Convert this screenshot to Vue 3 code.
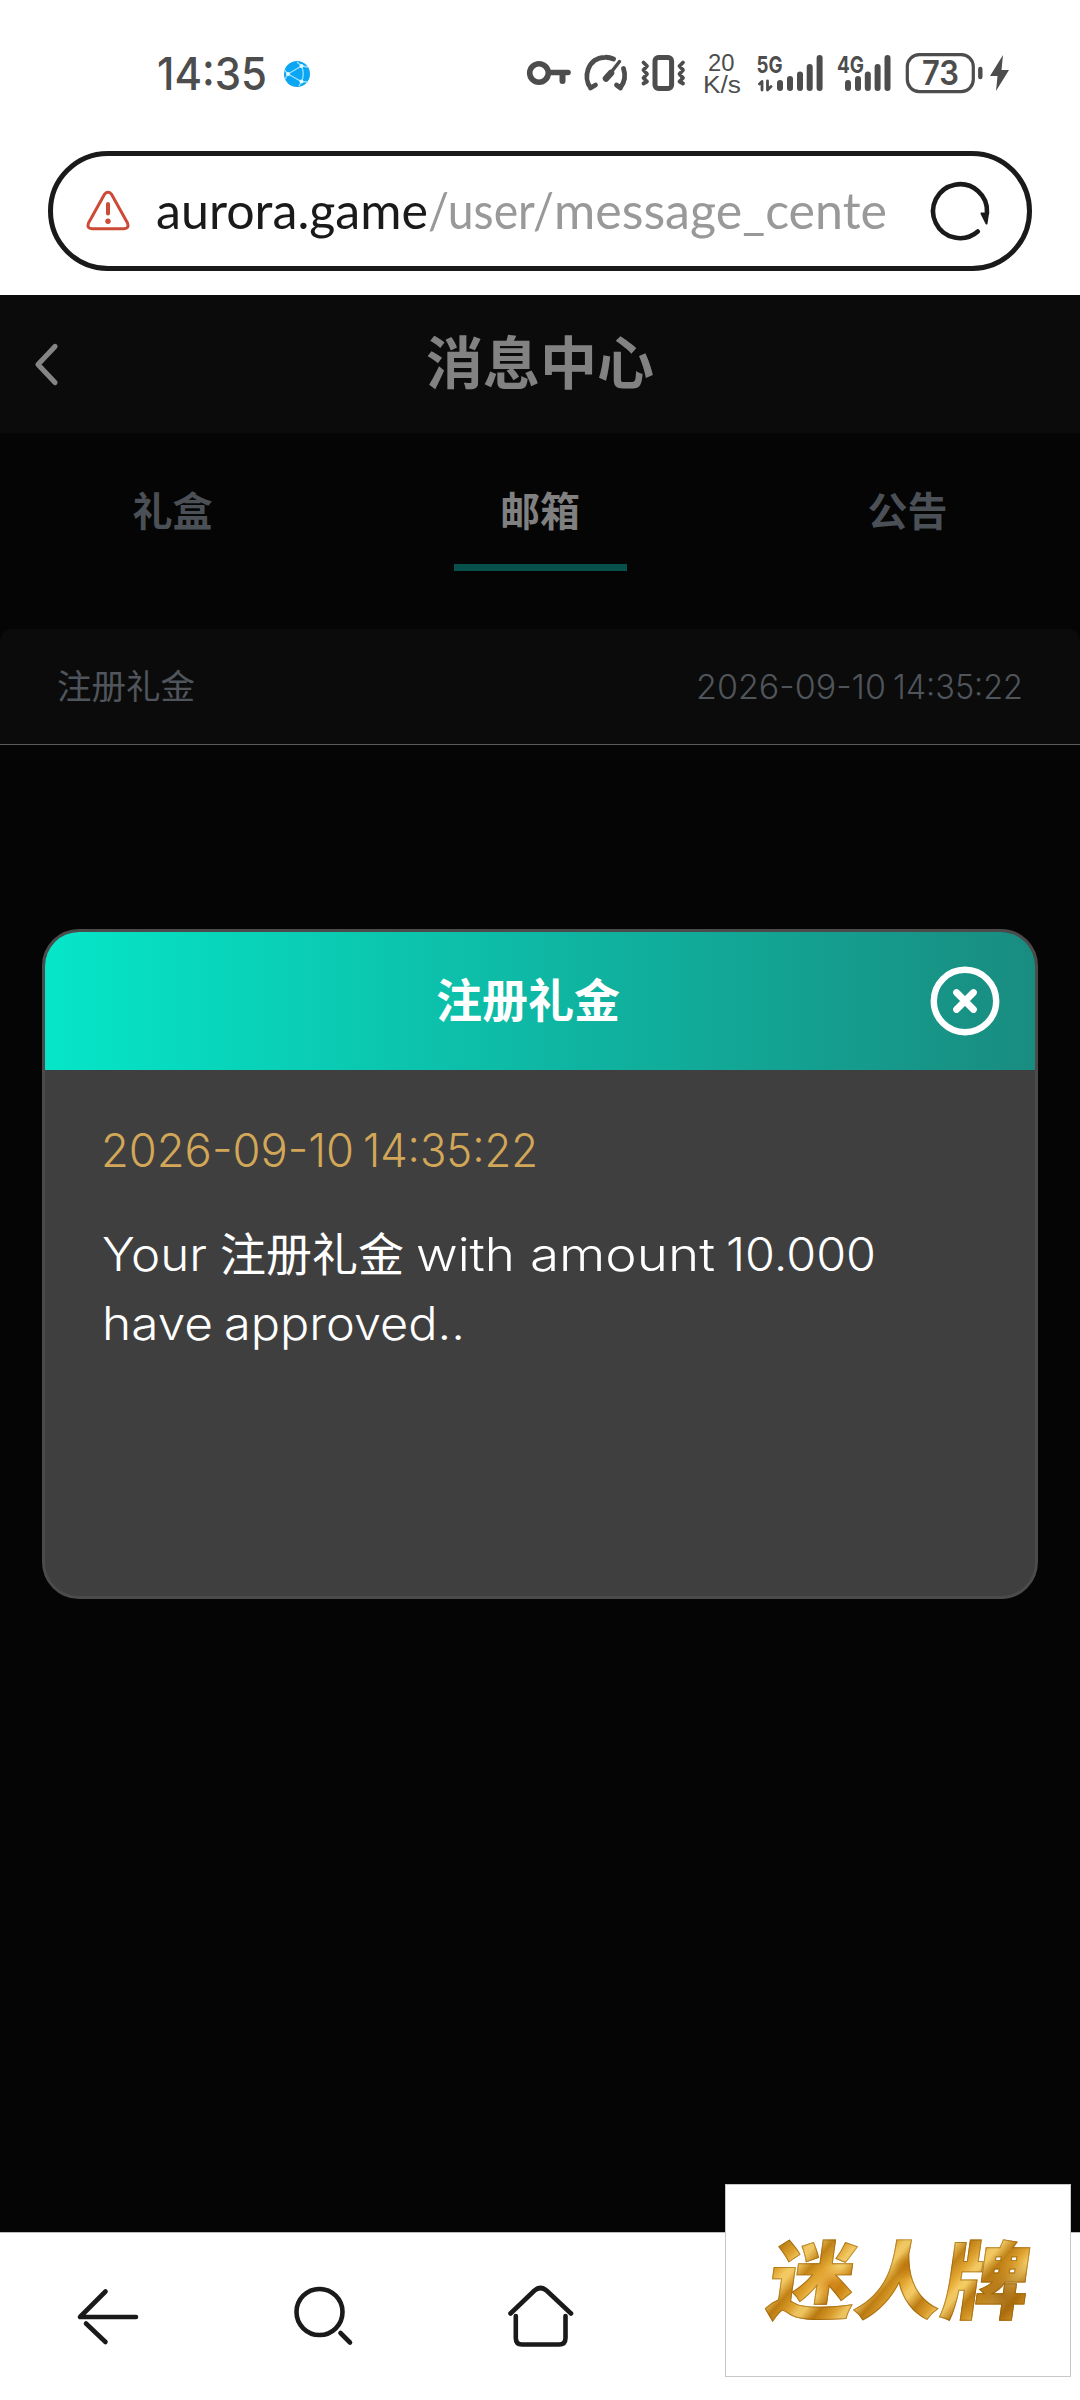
<script setup>
const tabs = [
  { label: '礼盒', active: false },
  { label: '邮箱', active: true },
  { label: '公告', active: false },
]
const signalA = [[780, 80], [790, 76], [800, 71.5], [809.7, 64], [819.6, 55]]
const signalB = [[848, 80], [858, 76], [867.8, 71.5], [877.6, 64], [887.5, 55]]
</script>

<template>
  <div class="phone">
    <header class="browser">
      <div class="status">
        <svg class="clock" width="160" height="60" viewBox="150 44 160 60">
          <text x="157" y="90" textLength="110" lengthAdjust="spacingAndGlyphs" font-size="45.5" font-weight="500">14:35</text>
          <circle cx="297" cy="74" r="13" fill="#0aa5f3" />
          <g stroke="#9be0ff" stroke-width="1.3" fill="none">
            <path d="M288 74 L301.500 66 Q305 74 301.500 81.500 Z M301.500 66 L297 62 M301.500 66 L308 67 M288 74 L284.500 70 M288 74 L285 79 M301.500 81.500 L308 82 M301.500 81.500 L299 86" />
          </g>
          <g fill="#e6f8ff"><circle cx="288" cy="74" r="2" /><circle cx="301.500" cy="66" r="2" /><circle cx="301.500" cy="81.500" r="2" /></g>
        </svg>
        <svg class="indicators" width="490" height="60" viewBox="525 44 490 60">
          <g fill="none" stroke="#4d4d4d" stroke-linecap="round" stroke-linejoin="round">
            <circle cx="539" cy="73" r="9.300" stroke-width="5.600" />
            <path d="M550 72.500H568" stroke-width="5.600" />
            <path d="M562.500 75V81" stroke-width="6" />
            <path d="M590.500 87.500C583 78 587 58 605 57.300Q609 57 613.500 59M623.500 68.500Q627 79 620.500 87.500M590.500 88L595.500 85M620.500 88L616.500 85" stroke-width="4.800" />
            <path d="M619.500 61.500L606 79" stroke-width="3.400" />
            <path d="M611 73L606 78.500" stroke-width="6.500" />
            <rect x="655" y="57.500" width="16.600" height="31" rx="3.500" stroke-width="5" />
            <path d="M643.500 62.500L647 66L643.500 70L647 74L643.500 78L647 81.500L643.500 83.500M683 62.500L679.500 66L683 70L679.500 74L683 78L679.500 81.500L683 83.500" stroke-width="3.800" />
            <rect x="907.300" y="54.600" width="66" height="37" rx="12" stroke-width="3.200" />
            <path d="M980.300 69V77" stroke-width="4.400" />
            <path d="M762 90V81.500L759.500 84M767.500 81V90L771 86.500" stroke-width="2.800" />
          </g>
          <g stroke="#4d4d4d" stroke-width="6" stroke-linecap="round">
            <line v-for="b in signalA" :key="b[0]" :x1="b[0]" :x2="b[0]" :y1="b[1] + 3" y2="88" />
            <line v-for="b in signalB" :key="b[0]" :x1="b[0]" :x2="b[0]" :y1="b[1] + 3" y2="88" />
          </g>
          <path d="M1003 55L990 76H997.500L996 91L1009 70H1001.500Z" fill="#4d4d4d" />
          <g fill="#4d4d4d">
            <text class="rate" x="708" y="70.500" textLength="26.500" lengthAdjust="spacingAndGlyphs" font-size="24">20</text>
            <text class="rate" x="703" y="92.500" textLength="38" lengthAdjust="spacingAndGlyphs" font-size="23">K/s</text>
            <text x="756.500" y="72.500" textLength="26" lengthAdjust="spacingAndGlyphs" font-size="23.500" font-weight="700">5G</text>
            <text x="837" y="72.500" textLength="27" lengthAdjust="spacingAndGlyphs" font-size="23.500" font-weight="700">4G</text>
            <text x="922" y="85" textLength="37" lengthAdjust="spacingAndGlyphs" font-size="34" font-weight="600">73</text>
          </g>
        </svg>
      </div>
      <div class="address">
        <svg class="warn" width="46" height="42" viewBox="85 190 46 42" fill="none" stroke="#cc4b37" stroke-linecap="round" stroke-linejoin="round">
          <path d="M104.500 194.200Q108 190.500 111.500 194.200L127.500 223Q129.500 228.500 124 228.700H92Q86.500 228.500 88.500 223Z" stroke-width="3" />
          <path d="M108 204V213.500" stroke-width="4" />
          <circle cx="108" cy="221.300" r="2.700" fill="#cc4b37" stroke="none" />
        </svg>
        <svg class="url" width="750" height="70" viewBox="150 180 750 70">
          <text x="156" y="229" textLength="272" lengthAdjust="spacingAndGlyphs" font-size="50" fill="#1a1a1a">aurora.game</text>
          <text x="428" y="229" textLength="126" lengthAdjust="spacingAndGlyphs" font-size="50" fill="#999">/user/</text>
          <text x="554" y="229" textLength="333" lengthAdjust="spacingAndGlyphs" font-size="50" fill="#999">message_cente</text>
        </svg>
        <svg class="reload" width="62" height="62" viewBox="929 180 62 62">
          <path d="M977.800 231.500A27 27 0 1 1 987 213" fill="none" stroke="#1a1a1a" stroke-width="4.600" stroke-linecap="round" />
          <path d="M981.500 213.500H988L986.500 223.500Z" fill="#1a1a1a" stroke="#1a1a1a" stroke-width="2" stroke-linejoin="round" />
        </svg>
      </div>
    </header>

    <main class="page">
      <div class="titlebar">
        <svg class="back" width="30" height="46" viewBox="0 0 30 46"><path d="M22 5.500L5 23.500L22 41.500" fill="none" stroke="#858585" stroke-width="5.200" stroke-linecap="round" stroke-linejoin="round" /></svg>
        <h1>消息中心</h1>
      </div>
      <nav class="tabs">
        <div v-for="t in tabs" :key="t.label" class="tab" :class="{ active: t.active }">{{ t.label }}</div>
      </nav>
      <div class="row">
        <span class="row-title">注册礼金</span>
        <svg class="row-date" width="328" height="46" viewBox="694 664 328 46" fill="#50555b" font-size="33.500" font-weight="350">
          <text x="695" y="699" textLength="190" lengthAdjust="spacingAndGlyphs">2026-09-10</text>
          <text x="892" y="699" textLength="130" lengthAdjust="spacingAndGlyphs">14:35:22</text>
        </svg>
      </div>

      <section class="dialog">
        <div class="dialog-head">
          <h2>注册礼金</h2>
          <svg class="close" width="70" height="70" viewBox="0 0 70 70" fill="none" stroke="#fff">
            <circle cx="35" cy="35" r="31.200" stroke-width="6.400" />
            <path d="M26.500 26.500L43.500 43.500M43.500 26.500L26.500 43.500" stroke-width="6.800" stroke-linecap="round" />
          </svg>
        </div>
        <svg class="message" width="800" height="260" viewBox="100 1120 800 260" font-weight="330" fill="#fff">
          <text x="101" y="1167" textLength="253" lengthAdjust="spacingAndGlyphs" font-size="46" fill="#d3a758">2026-09-10</text>
          <text x="363" y="1167" textLength="175" lengthAdjust="spacingAndGlyphs" font-size="46" fill="#d3a758">14:35:22</text>
          <text x="102" y="1270.500" textLength="105" lengthAdjust="spacingAndGlyphs" font-size="46">Your</text>
          <text x="220" y="1271" textLength="184" font-size="46" font-weight="400">注册礼金</text>
          <text x="416" y="1270.500" textLength="99" lengthAdjust="spacingAndGlyphs" font-size="46">with</text>
          <text x="530" y="1270.500" textLength="185" lengthAdjust="spacingAndGlyphs" font-size="46">amount</text>
          <text x="726" y="1270.500" textLength="150" lengthAdjust="spacingAndGlyphs" font-size="46">10.000</text>
          <text x="102" y="1340" textLength="111" lengthAdjust="spacingAndGlyphs" font-size="46">have</text>
          <text x="224" y="1340" textLength="241" lengthAdjust="spacingAndGlyphs" font-size="46">approved..</text>
        </svg>
      </section>
    </main>

    <footer class="toolbar">
      <svg width="70" height="64" viewBox="73 2285 70 64"><path d="M105.500 2291.500L80 2317H136M86 2323.500L105.500 2342" /></svg>
      <svg width="70" height="64" viewBox="289 2285 70 64"><circle cx="319.500" cy="2312" r="23" /><path d="M340.500 2333L350 2342.500" /></svg>
      <svg width="70" height="66" viewBox="504.500 2284 70 66"><path d="M510 2313.500L534 2290.500Q540 2285.500 546 2290.500L570.500 2313.500" /><path d="M515.300 2316V2338Q515.300 2344.500 521.500 2344.500H558.500Q565 2344.500 565 2338V2316" /></svg>
    </footer>
    <aside class="brand"><span>迷人牌</span></aside>
  </div>
</template>

<style>
body { margin: 0; background: #fff; }
</style>

<style scoped>
.phone {
  position: relative;
  display: flex;
  flex-direction: column;
  width: 1080px;
  height: 2400px;
  overflow: hidden;
  background: #fff;
  font-family: Inter, "Noto Sans CJK SC", sans-serif;
}
svg { display: block; flex: none; overflow: visible; }
.browser { height: 295px; box-sizing: border-box; padding: 44px 48px 0; }
.status { display: flex; justify-content: space-between; height: 107px; }
.clock { margin-left: 102px; fill: #4d4d4d; }
.indicators { margin-right: 17px; }
.rate { font-family: "Liberation Sans", sans-serif; }
.address {
  display: flex;
  align-items: center;
  box-sizing: border-box;
  width: 984px;
  height: 120px;
  padding-left: 32px;
  border: 5px solid #1a1a1a;
  border-radius: 60px;
}
.url { margin: 8px 0 0 19px; font-family: Lato, sans-serif; }
.reload { margin-left: 29px; }
.page { flex: none; height: 1937px; background: #050505; }
.titlebar { display: flex; align-items: center; height: 138px; background: #0b0b0b; }
.back { margin-left: 33px; }
h1 { flex: 1; margin: 0 63px 0 0; text-align: center; font-size: 57px; line-height: 80px; font-weight: 700; color: #828282; }
.tabs { display: flex; justify-content: space-between; height: 138px; margin: 0 86px; }
.tab {
  width: 173px;
  height: 131px;
  border-bottom: 7px solid transparent;
  text-align: center;
  font-size: 40px;
  line-height: 158px;
  font-weight: 700;
  color: #4b5056;
}
.tab.active { color: #808080; border-color: #07504b; }
.row {
  display: flex;
  align-items: center;
  justify-content: space-between;
  height: 115px;
  margin-top: 58px;
  padding: 0 57px;
  border-bottom: 1px solid #5a5a5a;
  border-radius: 12px 12px 0 0;
  background: #0b0b0b;
  color: #50555b;
  font-size: 34.5px;
}
.row-title { margin-bottom: 5px; }
.dialog {
  box-sizing: border-box;
  width: 996px;
  height: 670px;
  margin: 184px 0 0 42px;
  overflow: hidden;
  border: 3px solid #4b4b4b;
  border-radius: 37px;
  background: #3f3f3f;
}
.dialog-head { display: flex; align-items: center; height: 138px; background: linear-gradient(90deg, #05e6c8, #0fb3a0 55%, #198c80); }
h2 { flex: 1; margin: 0 0 3px 108px; text-align: center; font-size: 46px; line-height: 60px; font-weight: 700; color: #fff; }
.close { margin: 0 35px 0 27px; }
.message { margin: 50px 0 0 55px; }
.toolbar {
  display: flex;
  align-items: center;
  gap: 146px;
  flex: 1;
  padding-left: 73px;
  border-top: 1px solid #bbb;
  background: #fff;
}
.toolbar svg { fill: none; stroke: #1a1a1a; stroke-width: 4.6; stroke-linecap: round; stroke-linejoin: round; }
.brand {
  position: absolute;
  left: 725px;
  top: 2184px;
  display: flex;
  align-items: center;
  justify-content: center;
  box-sizing: border-box;
  width: 346px;
  height: 193px;
  border: 1px solid #c8c8c8;
  background: #fff;
}
.brand span {
  margin: 2px 0 0 3px;
  font-size: 87px;
  line-height: 110px;
  font-weight: 900;
  transform: skewX(-8deg) scaleY(0.97);
  color: transparent;
  -webkit-text-stroke: 1px rgba(140, 85, 5, 0.55);
  background:
    radial-gradient(circle at 24% 52%, rgba(205, 120, 10, 0.8), transparent 9%),
    radial-gradient(circle at 52% 35%, rgba(190, 115, 10, 0.8), transparent 9%),
    radial-gradient(circle at 90% 62%, rgba(150, 90, 5, 0.8), transparent 16%),
    repeating-linear-gradient(125deg, rgba(255, 222, 125, 0.7) 0 5px, rgba(170, 105, 5, 0.4) 17px, rgba(239, 180, 62, 0.5) 29px, rgba(255, 222, 125, 0.7) 38px),
    linear-gradient(180deg, #c58c23, #d99a25 50%, #b37410);
  -webkit-background-clip: text;
  background-clip: text;
}
</style>
